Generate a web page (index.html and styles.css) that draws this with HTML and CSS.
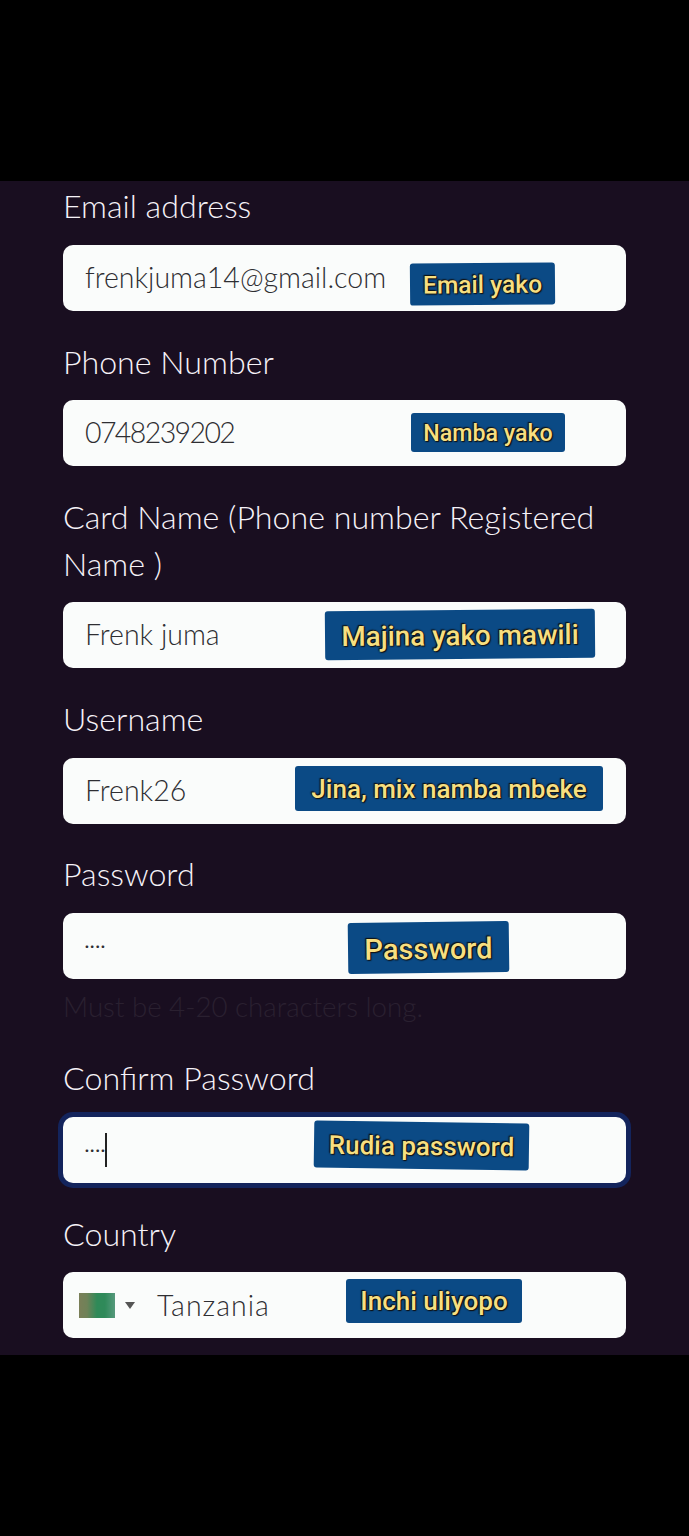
FILE: index.html
```html
<!DOCTYPE html>
<html lang="en">
<head>
    <meta charset="UTF-8">
    <meta name="viewport" content="width=device-width, initial-scale=1.0">
    <title>Register</title>
    <link rel="stylesheet" href="styles.css">
</head>
<body>
    <div class="bar-top"></div>
    <form class="form">
        <label class="label">Email address</label>
        <div class="field">
            <input class="input" type="text" value="frenkjuma14@gmail.com">
            <span class="tag tag-email">Email yako</span>
        </div>

        <label class="label">Phone Number</label>
        <div class="field">
            <input class="input input-phone" type="text" value="0748239202">
            <span class="tag tag-phone">Namba yako</span>
        </div>

        <label class="label">Card Name (Phone number Registered Name )</label>
        <div class="field">
            <input class="input" type="text" value="Frenk juma">
            <span class="tag tag-card">Majina yako mawili</span>
        </div>

        <label class="label">Username</label>
        <div class="field">
            <input class="input" type="text" value="Frenk26">
            <span class="tag tag-user">Jina, mix namba mbeke</span>
        </div>

        <label class="label">Password</label>
        <div class="field field-hinted">
            <input class="input input-dots" type="text" value="····">
            <span class="tag tag-pass">Password</span>
        </div>
        <p class="hint">Must be 4-20 characters long.</p>

        <label class="label">Confirm Password</label>
        <div class="field field-focus">
            <input class="input input-dots" type="text" value="····">
            <span class="caret"></span>
            <span class="tag tag-confirm">Rudia password</span>
        </div>

        <label class="label">Country</label>
        <div class="field field-last">
            <div class="input country">
                <span class="flag"></span>
                <span class="arrow"></span>
                <span class="country-name">Tanzania</span>
            </div>
            <span class="tag tag-country">Inchi uliyopo</span>
        </div>
    </form>
    <div class="bar-bottom"></div>
</body>
</html>
```

FILE: styles.css
```css
body {
    margin: 0;
    background-color: #000;
    font-family: "Lato", sans-serif;
}
.bar-top {
    height: 181px;
}
.bar-bottom {
    height: 181px;
}
.form {
    background-color: #190e20;
    padding: 1.4px 63px 17px;
    height: 1174px;
    box-sizing: border-box;
}
.label {
    display: block;
    color: #f6f2f8;
    font-size: 32.2px;
    font-weight: 300;
    line-height: 47px;
    margin-bottom: 15.5px;
}
.field {
    position: relative;
    height: 66px;
    margin-bottom: 26.75px;
}
.field-hinted {
    margin-bottom: 0;
}
.field-last {
    margin-bottom: 0;
}
.field-focus .input {
    box-shadow: 0 0 0 5px #13245c;
}
.input {
    display: block;
    box-sizing: border-box;
    width: 100%;
    height: 66px;
    border: 0;
    border-radius: 10px;
    background-color: #fafcfb;
    color: #2e2e32;
    font-family: "Lato", sans-serif;
    font-size: 28.5px;
    font-weight: 300;
    padding: 0 22px 2px;
    outline: none;
}
.input-phone {
    letter-spacing: -1.6px;
}
.input-dots {
    font-size: 14px;
    font-weight: 700;
    letter-spacing: 1.5px;
    padding-bottom: 0;
}
.caret {
    position: absolute;
    left: 42px;
    top: 16px;
    width: 2px;
    height: 34px;
    background-color: #222;
}
.hint {
    margin: 0;
    padding: 11px 0 30.6px;
    color: #2a2030;
    font-size: 27.7px;
    font-weight: 300;
    line-height: 34px;
}
.country {
    display: flex;
    align-items: center;
    padding: 0 0 0 16px;
}
.flag {
    width: 36px;
    height: 25px;
    background: linear-gradient(90deg, #7a7f58 0%, #6f8258 22%, #2f8a58 50%, #2f8a5a 72%, #56997c 100%);
    filter: blur(0.6px);
}
.arrow {
    width: 0;
    height: 0;
    margin-left: 10px;
    border-left: 5px solid transparent;
    border-right: 5px solid transparent;
    border-top: 7px solid #555;
}
.country-name {
    margin-left: 22px;
    letter-spacing: 1px;
}
.tag {
    position: absolute;
    display: flex;
    align-items: center;
    justify-content: center;
    box-sizing: border-box;
    background-color: #0b4a85;
    border-radius: 3px;
    color: #f7df80;
    font-family: "Roboto", sans-serif;
    font-weight: 500;
    white-space: nowrap;
    text-shadow: 0 0 2px #111, 1px 1px 1px #111, -1px -1px 1px #111;
}
.tag-email {
    left: 347px;
    top: 18px;
    width: 145px;
    height: 42px;
    font-size: 24.6px;
    transform: rotate(-0.5deg);
}
.tag-phone {
    left: 348px;
    top: 13px;
    width: 154px;
    height: 39px;
    padding-top: 1px;
    font-size: 23.2px;
}
.tag-card {
    left: 262px;
    top: 8px;
    width: 270px;
    height: 49px;
    padding-top: 2px;
    font-size: 27.8px;
    transform: rotate(-0.5deg);
}
.tag-user {
    left: 232px;
    top: 8px;
    width: 308px;
    height: 45px;
    padding-top: 2px;
    font-size: 26px;
}
.tag-pass {
    left: 285px;
    top: 9px;
    width: 161px;
    height: 51px;
    padding-top: 2px;
    font-size: 29px;
    transform: rotate(-0.7deg);
}
.tag-confirm {
    left: 251px;
    top: 5px;
    width: 215px;
    height: 47px;
    font-size: 26px;
    transform: rotate(0.8deg);
}
.tag-country {
    left: 283px;
    top: 7px;
    width: 176px;
    height: 44px;
    font-size: 26px;
}
```
